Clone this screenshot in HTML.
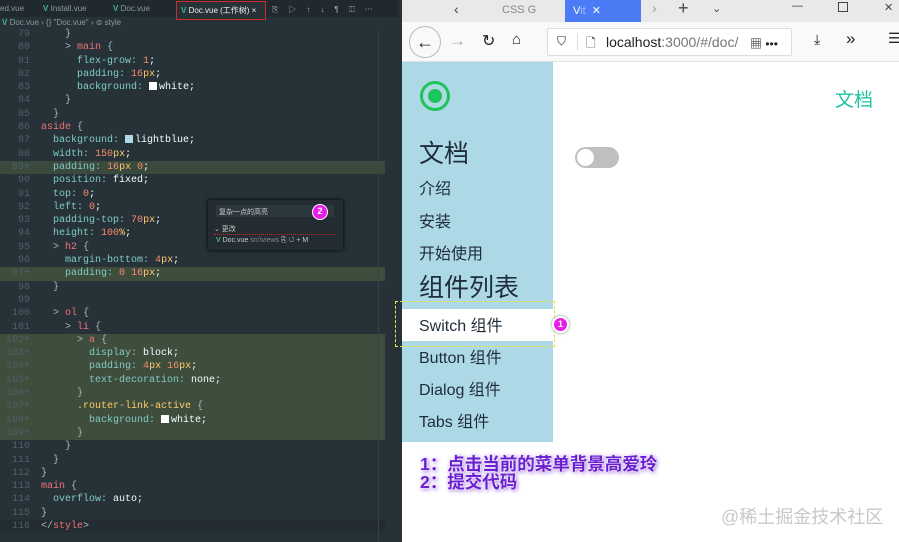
<!DOCTYPE html>
<html><head><meta charset="utf-8"><style>
*{margin:0;padding:0;box-sizing:border-box}
body{width:899px;height:542px;overflow:hidden;position:relative;background:#fff;font-family:"Liberation Sans","Noto Sans CJK SC",sans-serif}
.ed{position:absolute;left:0;top:0;width:398px;height:542px;background:#263238}
.tabs{position:absolute;left:0;top:0;width:398px;height:17px;background:#1f292e;font-size:8px;color:#8a9aa2}
.tabs span{position:absolute;top:4px}
.bc{position:absolute;left:0;top:17px;width:398px;height:12px;font-size:8px;color:#8a9aa2;padding-left:2px;line-height:12px}
.code{position:absolute;left:0;top:28px;width:385px;font-family:"Liberation Mono",monospace;font-size:10px;line-height:13.3px;color:#eeffff}
.l{height:13.3px;white-space:pre;position:relative}
.n{display:inline-block;width:30px;text-align:right;color:#4b6169;margin-right:11px}
.g{background:#3a4a3c}
.g2{background:#3f4d3d}
.p{color:#80cbc4}.s{color:#f07178}.u{color:#ffcb6b}.m{color:#f78c6c}.b{color:#aab6c0}
.sw{display:inline-block;width:8px;height:8px;vertical-align:-1px;margin-right:2px}
.br{position:absolute;left:398px;top:0;width:501px;height:542px}
.sb{position:absolute;left:402px;top:62px;width:151px;height:380px;background:#add8e6;color:#1f2d3a}
.sb div{line-height:1.15}
</style></head><body>
<div class="ed">
 <div class="tabs">
  <span style="left:0">ed.vue</span>
  <span style="left:43px"><b style="color:#41b883">V</b> Install.vue</span>
  <span style="left:113px"><b style="color:#41b883">V</b> Doc.vue</span>
  <div style="position:absolute;left:176px;top:1px;width:90px;height:19px;border:1px solid #d02a2a;background:#263238;color:#eee;padding:3px 4px;font-size:8px"><b style="color:#41b883">V</b> Doc.vue (工作树) ×</div>
  <span style="left:272px;color:#aaa;letter-spacing:10px">⎘▷↑↓¶◫⋯</span>
 </div>
 <div class="bc"><b style="color:#41b883">V</b> Doc.vue › {} "Doc.vue" › ⊜ style</div>
 <div class="code">
<div class="l"><span class="n">79</span>    <span class="b">}</span></div>
<div class="l"><span class="n">80</span>    <span class="b">&gt;</span> <span class="s">main</span> <span class="b">{</span></div>
<div class="l"><span class="n">81</span>      <span class="p">flex-grow:</span> <span class="m">1</span>;</div>
<div class="l"><span class="n">82</span>      <span class="p">padding:</span> <span class="m">16</span><span class="u">px</span>;</div>
<div class="l"><span class="n">83</span>      <span class="p">background:</span> <span class="sw" style="background:#fff"></span>white;</div>
<div class="l"><span class="n">84</span>    <span class="b">}</span></div>
<div class="l"><span class="n">85</span>  <span class="b">}</span></div>
<div class="l"><span class="n">86</span><span class="s">aside</span> <span class="b">{</span></div>
<div class="l"><span class="n">87</span>  <span class="p">background:</span> <span class="sw" style="background:#add8e6"></span>lightblue;</div>
<div class="l"><span class="n">88</span>  <span class="p">width:</span> <span class="m">150</span><span class="u">px</span>;</div>
<div class="l g"><span class="n">89+</span>  <span class="p">padding:</span> <span class="m">16</span><span class="u">px</span> <span class="m">0</span>;</div>
<div class="l"><span class="n">90</span>  <span class="p">position:</span> fixed;</div>
<div class="l"><span class="n">91</span>  <span class="p">top:</span> <span class="m">0</span>;</div>
<div class="l"><span class="n">92</span>  <span class="p">left:</span> <span class="m">0</span>;</div>
<div class="l"><span class="n">93</span>  <span class="p">padding-top:</span> <span class="m">70</span><span class="u">px</span>;</div>
<div class="l"><span class="n">94</span>  <span class="p">height:</span> <span class="m">100</span><span class="u">%</span>;</div>
<div class="l"><span class="n">95</span>  <span class="b">&gt;</span> <span class="s">h2</span> <span class="b">{</span></div>
<div class="l"><span class="n">96</span>    <span class="p">margin-bottom:</span> <span class="m">4</span><span class="u">px</span>;</div>
<div class="l g2"><span class="n">97+</span>    <span class="p">padding:</span> <span class="m">0</span> <span class="m">16</span><span class="u">px</span>;</div>
<div class="l"><span class="n">98</span>  <span class="b">}</span></div>
<div class="l"><span class="n">99</span></div>
<div class="l"><span class="n">100</span>  <span class="b">&gt;</span> <span class="s">ol</span> <span class="b">{</span></div>
<div class="l"><span class="n">101</span>    <span class="b">&gt;</span> <span class="s">li</span> <span class="b">{</span></div>
<div class="l g2"><span class="n">102+</span>      <span class="b">&gt;</span> <span class="s">a</span> <span class="b">{</span></div>
<div class="l g2"><span class="n">103+</span>        <span class="p">display:</span> block;</div>
<div class="l g2"><span class="n">104+</span>        <span class="p">padding:</span> <span class="m">4</span><span class="u">px</span> <span class="m">16</span><span class="u">px</span>;</div>
<div class="l g2"><span class="n">105+</span>        <span class="p">text-decoration:</span> none;</div>
<div class="l g2"><span class="n">106+</span>      <span class="b">}</span></div>
<div class="l g2"><span class="n">107+</span>      <span class="u">.router-link-active</span> <span class="b">{</span></div>
<div class="l g2"><span class="n">108+</span>        <span class="p">background:</span> <span class="sw" style="background:#fff"></span>white;</div>
<div class="l g2"><span class="n">109+</span>      <span class="b">}</span></div>
<div class="l"><span class="n">110</span>    <span class="b">}</span></div>
<div class="l"><span class="n">111</span>  <span class="b">}</span></div>
<div class="l"><span class="n">112</span><span class="b">}</span></div>
<div class="l"><span class="n">113</span><span class="s">main</span> <span class="b">{</span></div>
<div class="l"><span class="n">114</span>  <span class="p">overflow:</span> auto;</div>
<div class="l"><span class="n">115</span><span class="b">}</span></div>
<div class="l" style="background:#222c31"><span class="n">116</span><span class="b">&lt;/</span><span class="s">style</span><span class="b">&gt;</span></div>
 </div>
 <div style="position:absolute;left:208px;top:200px;width:135px;height:50px;background:#232c31;box-shadow:0 0 4px #000;font-size:7px;color:#ccc">
  <div style="position:absolute;left:8px;top:5px;width:118px;height:12px;background:#2d383e;padding:2px 3px">复杂一点的高亮</div>
  <div style="position:absolute;left:104px;top:4px;width:16px;height:16px;border-radius:50%;background:#e81ee8;border:1.5px solid #fff;color:#fff;font-weight:bold;font-size:9px;text-align:center;line-height:13px">2</div>
  <div style="position:absolute;left:6px;top:24px;width:122px;border-bottom:1px dotted #c22">⌄ 更改</div>
  <div style="position:absolute;left:8px;top:37px"><b style="color:#41b883">V</b> Doc.vue <span style="color:#888">src\views</span> ⎘ ↺ + M</div>
 </div>
 <div style="position:absolute;left:378px;top:30px;width:1px;height:512px;background:#33434b"></div>
</div>
<div style="position:absolute;left:398px;top:0;width:4px;height:542px;background:#263238"></div>
<div class="br">
 <div style="position:absolute;left:4px;top:0;width:497px;height:22px;background:#e9e9ea;font-size:11px;color:#444">
  <span style="position:absolute;left:52px;top:1px;font-size:14px">‹</span>
  <span style="position:absolute;left:100px;top:4px;color:#888">CSS G</span>
  <div style="position:absolute;left:163px;top:0;width:76px;height:22px;background:#4b7bf5;color:#fff;padding:4px 8px">V<span style="opacity:.5">it</span> &nbsp;✕</div>
  <span style="position:absolute;left:250px;top:0;font-size:14px;color:#999">›</span>
  <span style="position:absolute;left:276px;top:-2px;font-size:18px">+</span>
  <span style="position:absolute;left:310px;top:2px">⌄</span>
  <span style="position:absolute;left:390px;top:0">—</span>
  <span style="position:absolute;left:436px;top:2px;width:10px;height:10px;border:1px solid #444"></span>
  <span style="position:absolute;left:482px;top:1px">✕</span>
 </div>
 <div style="position:absolute;left:4px;top:22px;width:497px;height:40px;background:#f9f9fa;border-bottom:1px solid #e0e0e0;font-size:14px;color:#222">
  <div style="position:absolute;left:7px;top:4px;width:32px;height:32px;border-radius:50%;border:1px solid #bbb;text-align:center;line-height:30px;font-size:18px">←</div>
  <span style="position:absolute;left:47px;top:9px;color:#aaa;font-size:17px">→</span>
  <span style="position:absolute;left:80px;top:9px;font-size:16px">↻</span>
  <span style="position:absolute;left:110px;top:9px;font-size:15px">⌂</span>
  <div style="position:absolute;left:145px;top:6px;width:245px;height:28px;background:#fff;border:1px solid #ddd;border-radius:2px">
   <span style="position:absolute;left:9px;top:5px;font-size:12px">⛉</span>
   <span style="position:absolute;left:29px;top:4px;width:1px;height:18px;background:#ddd"></span>
   <span style="position:absolute;left:38px;top:5px;font-size:12px">🗋</span>
   <span style="position:absolute;left:58px;top:5px;font-size:14px">localhost<span style="color:#777">:3000/#/doc/</span></span>
   <span style="position:absolute;left:202px;top:6px;font-size:12px">▦ •••</span>
  </div>
  <span style="position:absolute;left:412px;top:9px">⤓</span>
  <span style="position:absolute;left:444px;top:7px;font-size:17px">»</span>
  <span style="position:absolute;left:486px;top:8px">☰</span>
 </div>
</div>
<div class="sb">
 <div style="position:absolute;left:18px;top:19px;width:30px;height:30px;border-radius:50%;border:3px solid #1ec45a"><div style="margin:5px;width:14px;height:14px;border-radius:50%;background:#1ec45a"></div></div>
 <div style="position:absolute;left:17px;top:78px;font-size:25px">文档</div>
 <div style="position:absolute;left:17px;top:119px;font-size:16px">介绍</div>
 <div style="position:absolute;left:17px;top:152px;font-size:16px">安装</div>
 <div style="position:absolute;left:17px;top:184px;font-size:16px">开始使用</div>
 <div style="position:absolute;left:17px;top:212px;font-size:25px">组件列表</div>
 <div style="position:absolute;left:0;top:247px;width:151px;height:32px;background:#fff"></div>
 <div style="position:absolute;left:17px;top:256px;font-size:16px">Switch 组件</div>
 <div style="position:absolute;left:17px;top:288px;font-size:16px">Button 组件</div>
 <div style="position:absolute;left:17px;top:320px;font-size:16px">Dialog 组件</div>
 <div style="position:absolute;left:17px;top:352px;font-size:16px">Tabs 组件</div>
</div>
<div style="position:absolute;left:395px;top:301px;width:160px;height:46px;border:1px dashed #e8e840"></div>
<div style="position:absolute;left:552px;top:316px;width:17px;height:17px;border-radius:50%;background:#e81ee8;border:2px solid #fff;box-shadow:0 0 3px #888;color:#fff;font-size:9px;font-weight:bold;text-align:center;line-height:13px">1</div>
<div style="position:absolute;left:575px;top:147px;width:44px;height:21px;border-radius:11px;background:#bfbfbf"><div style="position:absolute;left:2px;top:2px;width:17px;height:17px;border-radius:50%;background:#fff"></div></div>
<div style="position:absolute;left:835px;top:85px;font-size:19px;color:#1ec4a0">文档</div>
<div style="position:absolute;left:420px;top:455px;font-size:17.5px;line-height:18px;font-weight:bold;color:#6a1fd0;text-shadow:0 0 2px #fff,0 0 3px #fff,1px 1px 4px #6a1fd0">1：点击当前的菜单背景高爱玲<br>2：提交代码</div>
<div style="position:absolute;left:721px;top:503px;font-size:18px;color:#c8c8c8">@稀土掘金技术社区</div>
</body></html>
